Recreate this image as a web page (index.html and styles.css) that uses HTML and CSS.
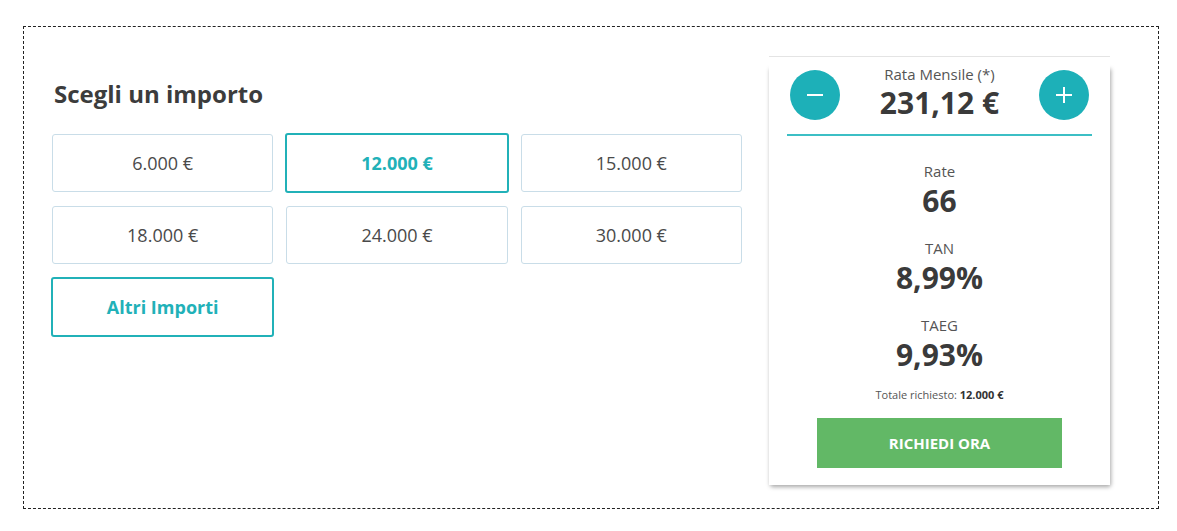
FILE: index.html
```html
<!DOCTYPE html>
<html lang="it">
<head>
    <meta charset="UTF-8">
    <meta name="viewport" content="width=device-width, initial-scale=1.0">
    <title>Scegli un importo</title>
    <link rel="stylesheet" href="styles.css">
</head>
<body>

    <div class="frame">
        <div class="choose">
            <h2>Scegli un importo</h2>
            <div class="amounts">
                <button class="amount">6.000 €</button>
                <button class="amount selected">12.000 €</button>
                <button class="amount">15.000 €</button>
                <button class="amount">18.000 €</button>
                <button class="amount">24.000 €</button>
                <button class="amount">30.000 €</button>
                <button class="amount other">Altri Importi</button>
            </div>
        </div>

        <div class="card">
            <div class="card-head">
                <button class="round" aria-label="meno">
                    <svg width="18" height="18" viewBox="0 0 18 18"><path d="M1 9h16" stroke="#fff" stroke-width="2"/></svg>
                </button>
                <div class="monthly">
                    <span class="label">Rata Mensile (*)</span>
                    <span class="big">231,12 €</span>
                </div>
                <button class="round" aria-label="più">
                    <svg width="18" height="18" viewBox="0 0 18 18"><path d="M1 9h16M9 1v16" stroke="#fff" stroke-width="2"/></svg>
                </button>
            </div>
            <div class="divider"></div>

            <div class="stats">
                <div class="stat">
                    <span class="label">Rate</span>
                    <span class="value">66</span>
                </div>
                <div class="stat">
                    <span class="label">TAN</span>
                    <span class="value">8,99%</span>
                </div>
                <div class="stat">
                    <span class="label">TAEG</span>
                    <span class="value">9,93%</span>
                </div>
            </div>

            <p class="total">Totale richiesto: <b>12.000 €</b></p>
            <button class="cta">RICHIEDI ORA</button>
        </div>
    </div>

</body>
</html>
```

FILE: styles.css
```css
body {
    margin: 0;
    font-family: "Open Sans", Arial, sans-serif;
    background: #fff;
    color: #3a3a3a;
}
.frame {
    box-sizing: border-box;
    width: 1136px;
    height: 483px;
    margin: 26px 0 0 23px;
    padding: 29px 0 0 28px;
    border: 1px dashed #222;
    display: flex;
    align-items: flex-start;
}
.choose {
    width: 690px;
}
.choose h2 {
    margin: 22px 0 24px;
    padding-left: 2px;
    font-size: 24px;
    line-height: 32px;
    font-weight: 700;
    color: #3c3c3c;
}
.amounts {
    display: grid;
    grid-template-columns: repeat(3, 1fr);
    grid-auto-rows: 58px;
    column-gap: 13px;
    row-gap: 14px;
}
.amount {
    font-family: inherit;
    font-size: 18px;
    color: #4a4a4a;
    background: #fff;
    border: 1px solid #c9dde8;
    border-radius: 3px;
    cursor: pointer;
}
.amount.selected,
.amount.other {
    margin: -1px;
    border: 2px solid #21b1b8;
    color: #21b1b8;
    font-weight: 700;
}
.card {
    position: relative;
    box-sizing: border-box;
    width: 341px;
    margin-left: 27px;
    padding: 7px 0 17px;
    border-top: 1px solid #e4e4e4;
    background: #fff;
    text-align: center;
}
.card::before {
    content: "";
    position: absolute;
    top: 10px;
    left: 0;
    right: 0;
    bottom: 0;
    border-radius: 0 0 3px 3px;
    box-shadow: 1px 2px 4px rgba(0, 0, 0, 0.35);
    z-index: -1;
}
.card-head {
    display: flex;
    justify-content: space-between;
    align-items: flex-start;
    padding: 0 21px;
}
.round {
    width: 50px;
    height: 50px;
    margin-top: 6px;
    padding: 0;
    border: none;
    border-radius: 50%;
    background: #1db0b8;
    display: flex;
    align-items: center;
    justify-content: center;
    cursor: pointer;
}
.monthly {
    display: flex;
    flex-direction: column;
}
.label {
    font-size: 15px;
    line-height: 20px;
    color: #555;
}
.big {
    margin-top: 1px;
    font-size: 30px;
    line-height: 36px;
    font-weight: 700;
    color: #3a3a3a;
}
.divider {
    height: 2px;
    margin: 13px 18px 0;
    background: #3cbfc5;
}
.stats {
    display: flex;
    flex-direction: column;
    gap: 17px;
    margin-top: 25px;
}
.stat {
    display: flex;
    flex-direction: column;
}
.value {
    font-size: 30px;
    line-height: 40px;
    font-weight: 700;
    color: #3a3a3a;
}
.total {
    margin: 12px 0 0;
    font-size: 11px;
    line-height: 16px;
    color: #555;
}
.total b {
    color: #333;
}
.cta {
    display: block;
    width: 245px;
    height: 50px;
    margin: 15px auto 0;
    border: none;
    background: #62b866;
    color: #fff;
    font-family: inherit;
    font-size: 15px;
    font-weight: 700;
    cursor: pointer;
}
```
